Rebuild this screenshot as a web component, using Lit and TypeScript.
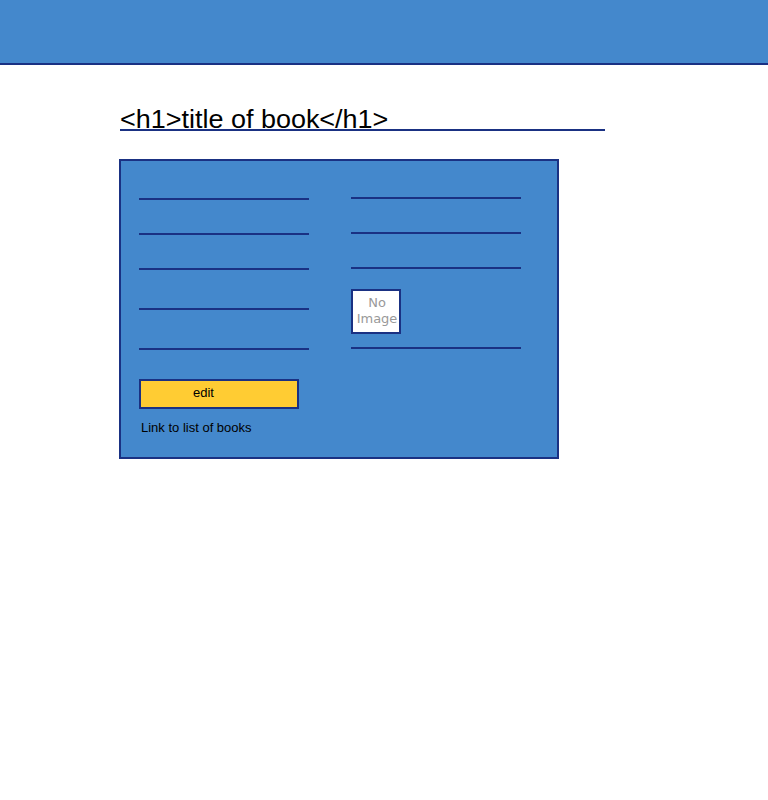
import { LitElement, html, css } from "lit";
import { customElement } from "lit/decorators.js";

@customElement("app-root")
export class AppRoot extends LitElement {
  static styles = css`
    :host {
      --navy: #1a3183;
      --blue: #4488cc;
      display: block;
      box-sizing: border-box;
      height: 800px;
      overflow: hidden;
      background: #fff;
      color: #000;
      font-family: "Liberation Sans", Arial, sans-serif;
      font-size: 13px;
    }
    * { box-sizing: border-box; }
    .banner {
      height: 65px;
      background: var(--blue);
      border-bottom: 2px solid var(--navy);
    }
    .title {
      margin: 39px 0 0 120px;
      width: 485px;
      height: 27px;
      border-bottom: 2px solid var(--navy);
      font-size: 26px;
      font-weight: 400;
      line-height: 30px;
      white-space: nowrap;
    }
    .title-text {
      display: inline-block;
      transform: scaleX(1.037);
      transform-origin: left;
    }
    .panel {
      display: grid;
      grid-template-columns: 170px 170px;
      column-gap: 42px;
      margin: 28px 0 0 119px;
      width: 440px;
      height: 300px;
      padding: 0 18px;
      background: var(--blue);
      border: 2px solid var(--navy);
    }
    .column { display: flex; flex-direction: column; }
    .left { padding-top: 4px; }
    .right { padding-top: 3px; }
    .field { flex: none; height: 35px; border-bottom: 2px solid var(--navy); }
    .tall { height: 40px; }
    .edit {
      width: 160px;
      height: 30px;
      margin: 29px 0 0;
      padding: 0 0 3px 52px;
      border: 2px solid var(--navy);
      border-radius: 0;
      background: #ffcc33;
      color: #000;
      font: inherit;
      line-height: 23px;
      text-align: left;
    }
    .link {
      margin: 11px 0 0 2px;
      color: #000;
      line-height: 15px;
      text-decoration: none;
    }
    .cover {
      flex: none;
      width: 50px;
      height: 45px;
      margin: 20px 0 13px;
      padding: 4px 0 0 2px;
      border: 2px solid var(--navy);
      background: #fff;
      color: #999;
      font: 13px/16px "DejaVu Sans", sans-serif;
      text-align: center;
      white-space: nowrap;
    }
    .end { height: 2px; }
  `;

  render() {
    return html`
      <header class="banner"></header>
      <h1 class="title"><span class="title-text">&lt;h1&gt;title of book&lt;/h1&gt;</span></h1>
      <main class="panel">
        <section class="column left">
          <div class="field"></div>
          <div class="field"></div>
          <div class="field"></div>
          <div class="field tall"></div>
          <div class="field tall"></div>
          <button class="edit">edit</button>
          <a class="link" href="#">Link to list of books</a>
        </section>
        <section class="column right">
          <div class="field"></div>
          <div class="field"></div>
          <div class="field"></div>
          <div class="cover">No<br />Image</div>
          <div class="field end"></div>
        </section>
      </main>
    `;
  }
}
